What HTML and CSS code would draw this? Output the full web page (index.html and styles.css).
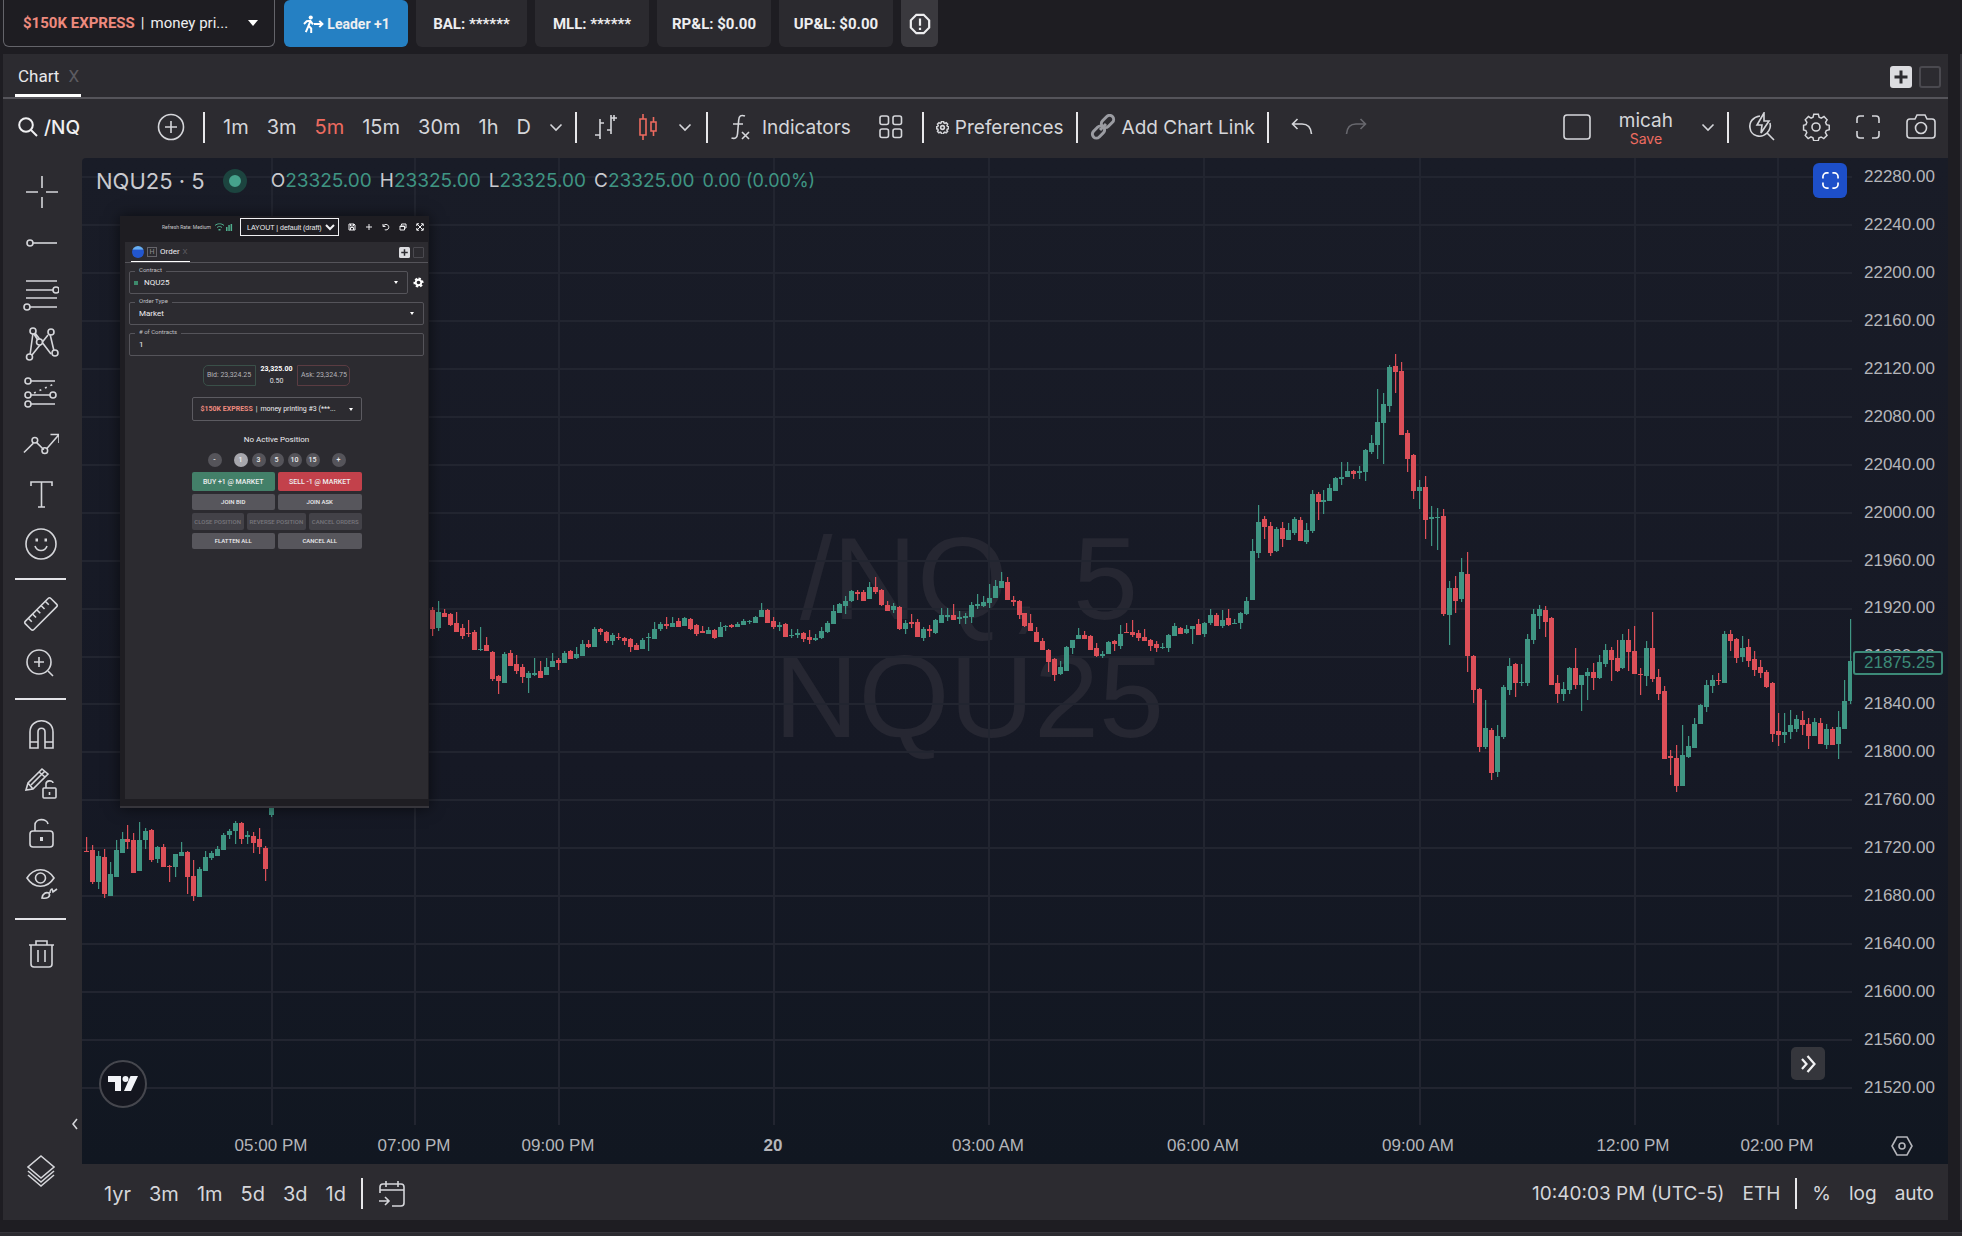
FILE: index.html
```html
<!DOCTYPE html>
<html lang="en">
<head>
<meta charset="utf-8">
<title>NQU25 Chart</title>
<link rel="stylesheet" href="styles.css">
</head>
<body>
<svg class="defs" aria-hidden="true">
  <symbol id="chev" viewBox="0 0 14 14"><path d="M1.500 4.500 7 10l5.500-5.500"/></symbol>
  <symbol id="gear" viewBox="0 0 28 28"><path d="M11.500 2h5l.8 3.300 2.300 1 3-1.800 3.400 3.500-1.700 2.900 1 2.400 3 .7v4.900l-3.200.8-1 2.300 1.800 3-3.500 3.400-2.900-1.700-2.300 1-.8 3.100h-5l-.8-3.200-2.200-1-3 1.800L2.200 25l1.700-3-1-2.300-2.500-.7v-5l2.600-.7 1-2.400-1.800-2.900L5.700 4.500l2.900 1.800 2.100-1z" transform="translate(1.200 -.6) scale(.92 .92)"/><circle cx="14" cy="14" r="4"/></symbol>
  <symbol id="plusbox" viewBox="0 0 22 22"><rect width="22" height="22" rx="3" fill="#dcdce0" stroke="none"/><path d="M11 4.500v13M4.500 11h13" stroke="#2b2a2f" stroke-width="3"/></symbol>
  <symbol id="corners" viewBox="0 0 24 24"><path d="M1 8V4a3 3 0 0 1 3-3h4M16 1h4a3 3 0 0 1 3 3v4M23 16v4a3 3 0 0 1-3 3h-4M8 23H4a3 3 0 0 1-3-3v-4"/></symbol>
</svg>

<header class="topbar">
  <button class="account" aria-haspopup="listbox"><strong>$150K EXPRESS</strong><span class="bar">|</span><span>money pri...</span><i class="caret"></i></button>
  <button class="leader"><svg viewBox="0 0 24 20"><g fill="none" stroke="#fff" stroke-width="2.200"><path d="M9 7 7 12l3 3v5M7 12l-3 7M2 10l3-3 4-.5 3 4M13 10h9M19 6.500l3.500 3.500-3.500 3.500"/></g><circle cx="9.500" cy="2.800" r="2.300" fill="#fff"/></svg>Leader +1</button>
  <span class="stat">BAL: ******</span>
  <span class="stat">MLL: ******</span>
  <span class="stat">RP&amp;L: $0.00</span>
  <span class="stat">UP&amp;L: $0.00</span>
  <button class="alert" aria-label="Alerts"><svg class="ic" viewBox="0 0 24 24"><path stroke-width="2.400" d="M8 2h8l6 6v8l-6 6H8l-6-6V8zM12 6v8M12 16v2.500"/></svg></button>
</header>

<div class="stage">
<main class="panel">
  <nav class="tabs">
    <a class="tab" href="#chart">Chart <span class="close">X</span></a>
    <button class="tabbtn" aria-label="Add tab"><svg viewBox="0 0 22 22"><use href="#plusbox"/></svg></button>
    <button class="tabbtn square" aria-label="Maximize"></button>
  </nav>

  <div class="toolbar">
    <button class="symbol"><svg class="ic w20" viewBox="0 0 20 20"><circle cx="8" cy="8" r="6.800" stroke-width="2"/><path stroke-width="2" d="m13 13 6 6"/></svg>/NQ</button>
    <button aria-label="Compare"><svg class="ic w28" viewBox="0 0 28 28"><circle cx="14" cy="14" r="12.500"/><path d="M14 8v12M8 14h12"/></svg></button>
    <i class="sep wide"></i>
    <div class="intervals">
      <button>1m</button><button>3m</button><button class="on">5m</button><button>15m</button><button>30m</button><button>1h</button><button>D</button>
      <button aria-label="More intervals"><svg class="ic w14" viewBox="0 0 14 14"><use href="#chev"/></svg></button>
    </div>
    <i class="sep tight"></i>
    <div class="icons">
      <button aria-label="Bars"><svg class="ic w24" viewBox="0 0 24 26"><path d="M6 5v20M1 21h5M6 9h4M17 1v19M13 16h4M17 4h6M20 1v6" /></svg></button>
      <button class="on" aria-label="Candles"><svg class="ic w24" viewBox="0 0 24 28"><path d="M4 6h6v16H4zM7 1v5M7 22v5M15 9h5v9h-5zM17.500 4v5M17.500 18v5"/></svg></button>
      <button aria-label="Chart types"><svg class="ic w14" viewBox="0 0 14 14"><use href="#chev"/></svg></button>
    </div>
    <i class="sep"></i>
    <button class="indicators"><svg class="ic w20" viewBox="0 0 20 26"><path d="M15 2c-4-1.500-6 0-6.300 4L7.500 20c-.3 4-2.500 5-6 4M3 10h10M12 18l7 7M19 18l-7 7"/></svg>Indicators</button>
    <button class="grid4" aria-label="Templates"><svg class="ic w24" viewBox="0 0 24 24"><rect x="1" y="1" width="8.500" height="8.500" rx="2"/><rect x="14" y="1" width="8.500" height="8.500" rx="2"/><rect x="1" y="14" width="8.500" height="8.500" rx="2"/><rect x="14" y="14" width="8.500" height="8.500" rx="2"/></svg></button>
    <i class="sep tight"></i>
    <button class="pref"><svg class="ic w12" viewBox="0 0 28 28"><g stroke-width="3.500"><use href="#gear"/></g></svg>Preferences</button>
    <i class="sep tight"></i>
    <button class="pref"><svg class="ic w26" viewBox="0 0 26 26"><g stroke="#9b9ca2" stroke-width="3"><rect x="10.500" y="3.500" width="14" height="8" rx="4" transform="rotate(-45 17.500 7.500)"/><rect x="1.500" y="14" width="14" height="8" rx="4" transform="rotate(-45 8.500 18)"/><path d="m10 16 6-6"/></g></svg>Add Chart Link</button>
    <i class="sep tight"></i>
    <div class="undo">
      <button aria-label="Undo"><svg class="ic w22" viewBox="0 0 22 20"><path d="M6.500 2 1.500 7l5 5M1.500 7H11c6 0 9 4 9.500 10"/></svg></button>
      <button class="off" aria-label="Redo"><svg class="ic w22" viewBox="0 0 22 20"><path d="m15.500 2 5 5-5 5M20.500 7H11C5 7 2 11 1.500 17"/></svg></button>
    </div>
    <div class="right">
      <button aria-label="Layout"><svg class="ic w28" viewBox="0 0 28 26"><rect x="1" y="1" width="26" height="24" rx="3"/></svg></button>
      <button class="save">micah<small>Save</small></button>
      <button aria-label="Layouts"><svg class="ic w14" viewBox="0 0 14 14"><use href="#chev"/></svg></button>
    </div>
    <i class="sep tight"></i>
    <div class="tools">
      <button aria-label="Quick search"><svg class="ic w28" viewBox="0 0 28 30"><path d="M12 4C5 5 1 10 2 16c1 8 11 11 17 5l7 7M19 21c3-3 4-6 3-10"/><path d="M16 1 9 13h5l-1 8 8-12h-5z"/></svg></button>
      <button aria-label="Settings"><svg class="ic w28" viewBox="0 0 28 28"><use href="#gear"/></svg></button>
      <button aria-label="Fullscreen"><svg class="ic w24" viewBox="0 0 24 24"><use href="#corners"/></svg></button>
      <button aria-label="Snapshot"><svg class="ic w30" viewBox="0 0 30 26"><path d="M4 5h5l2-4h8l2 4h5a3 3 0 0 1 3 3v13a3 3 0 0 1-3 3H4a3 3 0 0 1-3-3V8a3 3 0 0 1 3-3z"/><circle cx="15" cy="14" r="5.500"/></svg></button>
    </div>
  </div>

  <div class="body">
    <aside class="rail">
      <button aria-label="Cross"><svg class="ic w36" viewBox="0 0 36 36"><path d="M19 2v12M19 23v11M3 18h12M23 18h12"/></svg></button>
      <button aria-label="Trend line"><svg class="ic w36" viewBox="0 0 36 36"><circle cx="7" cy="18" r="3"/><path d="M10 18h24"/></svg></button>
      <button aria-label="Fib retracement"><svg class="ic w36" viewBox="0 0 36 36"><path d="M3 5h31M3 14h27M3 22h31M7 31h27"/><circle cx="33" cy="14" r="3"/><circle cx="4" cy="31" r="3"/></svg></button>
      <button aria-label="Pattern"><svg class="ic w36" viewBox="0 0 36 36"><path d="M10 7 7 29M12 7l16 21M27 8l4 17M25 9 9 29M11 8l5 8"/><g fill="#2c2b30"><circle cx="10" cy="5" r="3"/><circle cx="28" cy="6" r="3"/><circle cx="16.500" cy="16" r="3"/><circle cx="6.500" cy="31" r="3"/><circle cx="32" cy="27" r="3"/></g></svg></button>
      <button aria-label="Projection"><svg class="ic w36" viewBox="0 0 36 36"><path d="M8 5h24M8 19h19M8 28h24"/><path stroke-dasharray="2 4" d="m11 17 20-9"/><circle cx="5" cy="5" r="3"/><circle cx="5" cy="19" r="3"/><circle cx="30" cy="19" r="3"/><circle cx="5" cy="28" r="3"/></svg></button>
      <button aria-label="Zigzag"><svg class="ic w36" viewBox="0 0 38 36"><path d="m1 27 10-10M14 16l8 8M25 23l13-15M29 8h9v9"/><circle cx="12.500" cy="14" r="3"/><circle cx="23" cy="25" r="3"/></svg></button>
      <button aria-label="Text"><svg class="ic w36" viewBox="0 0 36 36"><path d="M8 10V6h21v4M18.500 6v25M15 31h7"/></svg></button>
      <button aria-label="Emoji"><svg class="ic w36" viewBox="0 0 36 36"><circle cx="18" cy="18" r="15"/><path d="M12 20c2 6 10 6 12 0"/><path stroke-width="3" d="M12.500 14h2.500M21.500 14H24"/></svg></button>
      <hr>
      <button aria-label="Ruler"><svg class="ic w36" viewBox="0 0 36 36"><g transform="rotate(-45 18 18)"><rect x="0" y="12" width="36" height="12" rx="2"/><path d="M6 12v5M12 12v5M18 12v5M24 12v5M30 12v5"/></g></svg></button>
      <button aria-label="Zoom in"><svg class="ic w36" viewBox="0 0 36 36"><circle cx="16" cy="16" r="12"/><path d="M16 11v10M11 16h10M25 25l5 5"/></svg></button>
      <hr>
      <button aria-label="Magnet"><svg class="ic w36" viewBox="0 0 36 36"><path d="M7 32V16c0-15 23-15 23 0v16h-8V16c0-5-7-5-7 0v16zM7 26h8M22 26h8"/></svg></button>
      <button aria-label="Keep drawing"><svg class="ic w36" viewBox="0 0 36 36"><path d="m3 24 2-7L19 3l6 5-15 15zM5 17l5 6M8 19 22 5M16 6l6 5"/><rect x="20" y="22" width="13" height="10" rx="1"/><path d="M23 22v-4c0-4 7-4 7-1M26.500 26v3"/></svg></button>
      <button aria-label="Lock"><svg class="ic w36" viewBox="0 0 36 36"><rect x="7" y="15" width="23" height="16" rx="3"/><path d="M12 15V9c0-7 12-7 13-1"/><path stroke-width="3" d="M18.500 21v4"/></svg></button>
      <button aria-label="Hide"><svg class="ic w36" viewBox="0 0 36 36"><path d="M4 12C11 1 24 1 31 12 24 23 11 23 4 12z"/><circle cx="17.500" cy="12" r="5"/><path d="M19 32c1-5 4-6 7-5 2 4-2 6-7 5zM27 27c0-2 1-4 2-4l1 3 4-3"/></svg></button>
      <hr>
      <button aria-label="Delete"><svg class="ic w36" viewBox="0 0 36 36"><path d="M6 9h25M13 9V5h11v4M8 9v19a3 3 0 0 0 3 3h15a3 3 0 0 0 3-3V9M15 14v12M22 14v12"/></svg></button>
      <button class="collapse" aria-label="Collapse"><svg class="ic" viewBox="0 0 6 12"><path d="M5 1 1 6l4 5"/></svg></button>
      <button class="layers" aria-label="Object tree"><svg class="ic w36" viewBox="0 0 36 36"><path d="m18 3 13 11-13 11L5 14zM5 18l13 11 13-11M5 22l13 11 13-11"/></svg></button>
    </aside>

    <div class="work">
      <section class="chart" id="chart">
        <div class="plot">
          <div class="watermark"><span>/NQ, 5</span><span>NQU25</span></div>
          <svg class="candles" id="candles" viewBox="0 0 1770 967" preserveAspectRatio="none" role="img" aria-label="NQU25 five minute candles"></svg>
          <div class="legend">
            <h1>NQU25 · 5</h1><i class="live"></i>
            <span>O<b>23325.00</b></span><span>H<b>23325.00</b></span><span>L<b>23325.00</b></span><span>C<b>23325.00</b></span><b class="change">0.00 (0.00%)</b>
          </div>
          <button class="expand" aria-label="Expand"><svg class="ic" viewBox="0 0 18 18"><path stroke-width="1.800" d="M1 7V5a4 4 0 0 1 4-4h2M11 1h2a4 4 0 0 1 4 4v2M17 11v2a4 4 0 0 1-4 4h-2M7 17H5a4 4 0 0 1-4-4v-2"/></svg></button>
          <button class="latest" aria-label="Scroll to latest"><svg class="ic" viewBox="0 0 18 18"><path stroke-width="2.200" d="m3 4 4.500 5L3 14M8.500 1l7 8-7 8"/></svg></button>
          <a class="logo" href="#tv" aria-label="TradingView"><svg viewBox="0 0 32 20"><path fill="#f2f3f7" d="M1 2h13v15H8V8H1zM24 17h-7l6.500-15h7.500z"/><circle cx="18.500" cy="5" r="3" fill="#f2f3f7"/></svg></a>
        </div>
        <div class="prices">
          <span>22280.00</span><span>22240.00</span><span>22200.00</span><span>22160.00</span><span>22120.00</span><span>22080.00</span><span>22040.00</span><span>22000.00</span><span>21960.00</span><span>21920.00</span><span>21880.00</span><span>21840.00</span><span>21800.00</span><span>21760.00</span><span>21720.00</span><span>21680.00</span><span>21640.00</span><span>21600.00</span><span>21560.00</span><span>21520.00</span>
          <output class="last">21875.25</output>
        </div>
        <div class="times"><span>05:00 PM</span><span>07:00 PM</span><span>09:00 PM</span><strong>20</strong><span>03:00 AM</span><span>06:00 AM</span><span>09:00 AM</span><span>12:00 PM</span><span>02:00 PM</span></div>
        <button class="axisset" aria-label="Axis settings"><svg class="ic w22" viewBox="0 0 22 22"><path d="M6 2h10l5 9-5 9H6l-5-9z"/><circle cx="11" cy="11" r="3"/></svg></button>

        <section class="order">
          <div class="ohead">
            <span class="rate">Refresh Rate: Medium</span>
            <svg class="green" viewBox="0 0 18 8"><g fill="none" stroke="#4fae8d"><path d="M0 2.500C2.500.2 6.500.2 9 2.500M2 4.500c1.500-1.300 3.500-1.300 5 0"/></g><path fill="#4fae8d" d="M3.500 6h2v1.500h-2zM11 4h1.500v4H11zM13.300 2h1.500v6h-1.500zM15.600 1h1.500v7h-1.500z"/></svg>
            <select aria-label="Layout"><option>LAYOUT | default (draft)</option></select>
            <button aria-label="Save layout"><svg class="ic" viewBox="0 0 16 16"><path d="M2 2h10l2 2v10H2zM5 2v4h6V2M5 14V9h6v5"/></svg></button>
            <button aria-label="Add"><svg class="ic" viewBox="0 0 16 16"><path d="M8 2v12M2 8h12"/></svg></button>
            <button aria-label="Reset"><svg class="ic" viewBox="0 0 16 16"><path d="M2 2v5h5M2.500 6.500c4-7 12-3 11 3-1 4-5 5-8 4"/></svg></button>
            <button aria-label="Windows"><svg class="ic" viewBox="0 0 16 16"><path d="M5 5V2h9v8h-3M2 6h9v8H2zM2 7h9"/></svg></button>
            <button aria-label="Expand window"><svg class="ic" viewBox="0 0 16 16"><path d="m2 2 12 12M14 2 2 14M1.500 6V1.500H6M10 1.500h4.500V6M14.500 10v4.500H10M6 14.500H1.500V10"/></svg></button>
          </div>
          <div class="opanel">
            <nav class="otabs">
              <a class="otab" href="#order"><i class="ball"></i><i class="hbox">H</i>Order <span class="close">X</span></a>
              <button class="obtn" aria-label="Add tab"><svg viewBox="0 0 22 22"><use href="#plusbox"/></svg></button>
              <button class="obtn square" aria-label="Maximize"></button>
            </nav>
            <div class="form">
              <div class="line">
                <div class="field dot"><label for="contract">Contract</label><select id="contract"><option>NQU25</option></select><i class="caret"></i></div>
                <button class="cog" aria-label="Order settings"><svg viewBox="0 0 24 24"><path fill="none" stroke="#fff" stroke-width="4" stroke-dasharray="5.200 4.225" d="M12 3a9 9 0 1 1 0 18 9 9 0 1 1 0-18"/><circle cx="12" cy="12" r="6" fill="none" stroke="#fff" stroke-width="4"/></svg></button>
              </div>
              <div class="field"><label for="type">Order Type</label><select id="type"><option>Market</option></select><i class="caret"></i></div>
              <div class="field"><label for="qty"># of Contracts</label><input id="qty" value="1"></div>
            </div>
            <div class="quote"><span class="bid">Bid: 23,324.25</span><span class="mid"><b>23,325.00</b>0.50</span><span class="ask">Ask: 23,324.75</span></div>
            <button class="oacct" aria-haspopup="listbox"><strong>$150K EXPRESS</strong><span class="bar">|</span><span>money printing #3 (***...</span><i class="caret"></i></button>
            <p class="pos">No Active Position</p>
            <div class="qtys"><button class="end">-</button><button class="sel">1</button><button>3</button><button>5</button><button>10</button><button>15</button><button class="end">+</button></div>
            <div class="acts">
              <div class="row big"><button class="buy">BUY +1 @ MARKET</button><button class="sell">SELL -1 @ MARKET</button></div>
              <div class="row"><button>JOIN BID</button><button>JOIN ASK</button></div>
              <div class="row three"><button disabled>CLOSE POSITION</button><button disabled>REVERSE POSITION</button><button disabled>CANCEL ORDERS</button></div>
              <div class="row"><button>FLATTEN ALL</button><button>CANCEL ALL</button></div>
            </div>
          </div>
        </section>
      </section>

      <footer class="ranges">
        <button>1yr</button><button>3m</button><button>1m</button><button>5d</button><button>3d</button><button>1d</button>
        <i class="sep"></i>
        <button aria-label="Go to date"><svg class="ic w28" viewBox="0 0 28 28"><path d="M2 13V7a3 3 0 0 1 3-3h18a3 3 0 0 1 3 3v16a3 3 0 0 1-3 3h-9M2 10h24M8 1v6M20 1v6M1 21h10M7 17l4 4-4 4"/></svg></button>
        <div class="clock"><span>10:40:03 PM (UTC-5)</span><button>ETH</button><i class="sep"></i><button>%</button><button>log</button><button>auto</button></div>
      </footer>
    </div>
  </div>
</main>
<div class="nextcol"></div>
</div>
<div class="nextrow"></div>
<script src="chart.js"></script>
</body>
</html>
```
FILE: styles.css
```css
* { box-sizing: border-box; }
body {
  margin: 0;
  height: 100vh;
  min-height: 1100px;
  display: flex;
  flex-direction: column;
  background: #1e1d22;
  color: #d5d6da;
  font-family: Inter, "Liberation Sans", sans-serif;
  font-size: 19px;
  overflow: hidden;
}
button, select, input { font: inherit; color: inherit; background: none; border: 0; padding: 0; margin: 0; }
button { display: flex; align-items: center; justify-content: center; white-space: nowrap; cursor: pointer; }
a { color: inherit; text-decoration: none; }
svg { display: block; flex: none; }
.defs { width: 0; height: 0; position: absolute; }
.ic { fill: none; stroke: currentColor; stroke-width: 1.600; }
.w12 { width: 13px; } .w14 { width: 14px; } .w20 { width: 20px; } .w22 { width: 22px; }
.w24 { width: 24px; } .w26 { width: 26px; } .w28 { width: 28px; } .w30 { width: 30px; } .w36 { width: 36px; }

/* account bar */
.topbar {
  display: flex;
  gap: 8px;
  height: 54px;
  padding: 0 3px 7px;
  font: bold 15px Roboto, sans-serif;
  color: #eeeef0;
}
.topbar > * { border-radius: 0 0 6px 6px; }
.account { width: 272px; padding: 0 16px 0 19px; justify-content: flex-start; border: 1px solid #64646a; border-top: 0; font-size: 15px; font-weight: 400; }
.account strong, .oacct strong { color: #ee8a7e; font-weight: 700; }
.bar { margin: 0 6px; font-weight: 400; }
.caret { margin-left: auto; border: 5px solid transparent; border-top: 6px solid #fff; border-bottom: 0; }
.leader { width: 124px; background: #2580c3; gap: 3px; font-size: 14px; }
.topbar .leader { border-radius: 6px; margin-left: 1px; }
.leader svg { width: 22px; height: 18px; }
.stat { width: 114px; display: grid; place-items: center; background: #2b2a2f; }
.stat:nth-of-type(1) { width: 111px; }
.alert { width: 37px; background: #3a393e; }
.alert svg { width: 22px; }

.stage { flex: 1; min-height: 0; display: flex; gap: 12px; padding-left: 3px; }
.panel { flex: 1; min-width: 0; display: flex; flex-direction: column; background: #2c2b30; }
.nextcol { width: 2px; background: #35343a; }
.nextrow { height: 4px; margin-top: 12px; background: #2c2b30; border-top: 1px solid #35343a; }

/* tab strip */
.tabs { height: 45px; display: flex; align-items: center; gap: 7px; padding: 0 7px 0 12px; border-bottom: 2px solid #55545a; }
.tab { align-self: stretch; display: flex; align-items: center; gap: 9px; margin-right: auto; padding: 4px 2px 0 3px; border-bottom: 3px solid #fff; font: 17px Roboto, sans-serif; color: #e8e8ea; }
.close { color: #5c5b61; font-weight: 400; }
.tabbtn { width: 22px; height: 22px; margin-top: 2px; }
.square { border: 2px solid #4a494f; border-radius: 3px; }

/* chart toolbar */
.toolbar { height: 59px; display: flex; align-items: center; padding: 0 12px 3px 15px; }
.sep { width: 2px; height: 31px; margin: 0 14px; background: #e8e8ea; }
.sep.wide { margin: 0 18px; }
.sep.tight { margin: 0 12px; }
.symbol { width: 139px; justify-content: flex-start; gap: 6px; color: #f0f0f2; font-weight: 500; }
.intervals { display: flex; gap: 18px; font-size: 20px; }
.on { color: #ee6b60; }
.icons { display: flex; align-items: center; gap: 18px; padding-left: 5px; }
.indicators { gap: 12px; margin-left: 8px; }
.grid4 { margin: 0 7px 0 28px; }
.pref { gap: 6px; }
.undo { display: flex; gap: 32px; margin-left: 10px; }
.off { color: #68686e; }
.right { display: flex; align-items: center; gap: 28px; margin-left: auto; }
.save { flex-direction: column; line-height: 20px; padding-top: 4px; }
.save small { font-size: 14px; line-height: 16px; color: #ee6b60; }
.tools { display: flex; align-items: center; gap: 26px; padding-left: 7px; }

.body { flex: 1; min-height: 0; display: flex; }
.rail { position: relative; width: 79px; display: flex; flex-direction: column; align-items: center; padding: 8px 4px 24px 0; }
.rail button { width: 50px; height: 50px; }
.rail hr { width: 51px; height: 2px; margin: 9px 0; border: 0; background: #e4e4e8; }
.rail button:nth-child(-n+3) { height: 51px; }
.rail .layers { margin-top: auto; }
.rail .collapse { position: absolute; right: 4px; bottom: 90px; width: 6px; height: 12px; }
.collapse svg { width: 6px; }

.work { flex: 1; min-width: 0; display: flex; flex-direction: column; }
.chart {
  position: relative;
  flex: 1;
  display: grid;
  grid-template: 1fr 39px / 1fr 96px;
  background: linear-gradient(#191c27, #161925 60%, #111721);
  border-top-left-radius: 4px;
  font-family: "Liberation Sans", sans-serif;
  font-size: 17px;
  color: #b4b5ba;
}
.plot { position: relative; }
.candles { position: absolute; inset: 0; width: 100%; height: 100%; }
.candles .grid { stroke: #222530; stroke-width: 2; }
.candles .up { fill: #3f9583; }
.candles .down { fill: #dc4f58; }
.watermark { position: absolute; inset: 0; display: flex; flex-direction: column; align-items: center; justify-content: center; padding: 0 0 7px 4px; font-size: 117px; line-height: 118px; color: #262732; }
.legend { position: absolute; top: 10px; left: 14px; display: flex; align-items: center; gap: 8px; font: 19px/26px Inter, sans-serif; color: #c9cacf; }
.legend h1 { margin: 0 10px 0 0; font-size: 22px; font-weight: 400; }
.legend b { font-weight: 400; color: #3f9583; }
.legend .change { font-size: 18px; }
.live { width: 24px; height: 24px; margin-right: 16px; border: 6px solid #1c443f; border-radius: 50%; background: #46a28c; }
.expand { position: absolute; top: 5px; right: 5px; width: 34px; height: 35px; border-radius: 6px; background: #1d4fc9; color: #fff; }
.expand svg { width: 17px; }
.latest { position: absolute; right: 27px; bottom: 45px; width: 34px; height: 33px; border-radius: 5px; background: #35363c; color: #f2f2f4; }
.latest svg { width: 18px; }
.logo { position: absolute; left: 17px; bottom: 17px; width: 48px; height: 48px; display: grid; place-items: center; border: 2px solid #46474e; border-radius: 50%; background: #14161f; }
.logo svg { width: 32px; }
.prices { position: relative; display: flex; flex-direction: column; justify-content: space-between; padding: 8px 0 26px 12px; line-height: 22px; }
.last { position: absolute; top: 51%; left: 1px; width: 90px; height: 24px; padding-left: 9px; border: 2px solid #3c8a78; border-radius: 3px; background: #151a25; color: #3c8a78; line-height: 20px; }
.times { display: grid; grid-template-columns: 189fr 143fr 144fr 215fr 215fr 215fr 215fr 215fr 144fr 75fr; align-items: center; padding-top: 3px; }
.times > * { justify-self: end; transform: translateX(50%); white-space: nowrap; }
.axisset { padding-top: 2px; margin-left: 3px; }

.ranges { height: 56px; display: flex; align-items: center; gap: 18px; padding: 3px 14px 0 22px; font-size: 20px; }
.ranges .sep { margin: 0 -3px; }
.clock { display: flex; align-items: center; gap: 18px; margin-left: auto; font-size: 19px; }

/* order window */
.order { position: absolute; top: 58px; left: 38px; width: 309px; height: 592px; padding: 0 1px 7px 5px; display: flex; flex-direction: column; background: #1e1d22; border-bottom: 2px solid #36353b; box-shadow: 0 0 14px #0009; font: 8px/10px Roboto, sans-serif; color: #eeeef0; }
.ohead { height: 26px; display: flex; align-items: center; justify-content: flex-end; gap: 9px; padding: 0 4px 4px 0; }
.ohead .rate { font-size: 5px; margin-right: -5px; color: #c8c8cc; white-space: nowrap; }
.ohead .green { width: 18px; height: 8px; margin-right: -2px; }
.ohead select { width: 99px; height: 18px; padding-left: 2px; border: 1px solid #f0f0f2; font: 7px "Liberation Sans", sans-serif; background: #1e1d22; }
.ohead button svg { width: 8px; stroke-width: 2; }
.opanel { flex: 1; display: flex; flex-direction: column; align-items: center; background: #2c2b30; }
.otabs { align-self: stretch; height: 21px; display: flex; align-items: center; gap: 3px; padding: 0 4px 0 6px; border-bottom: 1px solid #55545a; }
.otab { align-self: stretch; display: flex; align-items: center; gap: 3px; padding: 0 2px 0 1px; margin-right: auto; border-bottom: 1px solid #fff; }
.ball { width: 12px; height: 12px; border-radius: 50%; background: linear-gradient(#67aef2 0 25%, #2256cf 35%); }
.hbox { width: 10px; height: 10px; border: 1px solid #66656b; font: 7px/8px Roboto, sans-serif; text-align: center; color: #8e8d93; }
.obtn { width: 11px; height: 11px; }
.obtn svg { width: 11px; }
.obtn.square { border-width: 1px; border-radius: 1px; }
.form { align-self: stretch; display: flex; flex-direction: column; gap: 8px; padding: 8px 4px 0; }
.line { display: flex; align-items: center; gap: 5px; }
.field { position: relative; flex: 1 0 auto; display: flex; align-items: center; height: 23px; padding: 0 9px; border: 1px solid #55545a; border-radius: 2px; }
.field label { position: absolute; top: -6px; left: 5px; padding: 0 4px; background: #2c2b30; font-size: 6px; line-height: 8px; color: #c0c0c4; }
.field select, .field input { flex: 1; min-width: 0; width: 100px; height: 18px; appearance: none; font-size: 8px; }
.field.dot::before { content: ""; width: 4px; height: 4px; margin: 0 6px 0 -5px; background: #3d8a6c; }
.order .caret { border-width: 3px 2px 0; }
.cog svg { width: 11px; }
.quote { display: flex; align-items: center; gap: 5px; margin-top: 7px; color: #b4b4b8; }
.quote .mid { display: grid; text-align: center; font-size: 7px; line-height: 12px; color: #e0e0e3; }
.quote b { color: #fff; }
.bid, .ask { width: 53px; height: 21px; display: grid; place-items: center; font-size: 7px; white-space: nowrap; border: 1px solid #3a5049; border-radius: 5px 0 0 5px; }
.ask { border-color: #5b3c42; border-radius: 0 5px 5px 0; }
.oacct { width: 170px; height: 24px; margin-top: 10px; padding: 0 8px; font-size: 7px; border: 1px solid #5c5b61; border-radius: 2px; }
.order .bar { margin: 0 3px; }
.pos { margin: 14px 0 8px; }
.qtys { display: flex; gap: 4px; font-size: 7px; }
.qtys button { width: 14px; height: 14px; border-radius: 50%; background: #55545a; font-weight: 500; }
.qtys .sel { background: #a6a6ac; margin-left: 8px; }
.qtys .end:last-child { margin-left: 8px; }
.acts { width: 170px; display: flex; flex-direction: column; gap: 3px; margin-top: 5px; }
.row { display: flex; gap: 3px; }
.row button { flex: 1 1 0; height: 16px; border-radius: 2px; background: #57565c; font-size: 6px; font-weight: 500; }
.row.big button { height: 19px; font-size: 7px; }
.row .buy { background: #438069; }
.row .sell { background: #c3414b; }
.row.three button { flex: auto; height: 17px; background: #434248; color: #77767c; }
```
FILE: chart.js
```javascript
// One entry per five-minute bar: direction, then high, body top, body bottom, low on the 967-unit plot.
const early = `d679 693 694 694;d687 692 724 726;u693 698 724 731;d691 699 736 740;u704 716 738 738;u682 692 719 719;u674 681 695 695;d667 681 684 691;d675 682 715 715;u664 682 713 713;u670 673 682 691;d671 672 702 704;u688 689 701 705;d686 689 709 709;d707 708 709 724;u696 696 709 719;u684 694 698 698;d693 694 719 736;d702 718 738 743;u709 711 739 739;u693 699 713 713;u693 695 700 702;u688 691 698 698;u675 677 692 692;u671 673 677 681;u663 665 673 686;d664 665 681 686;u673 677 679 686;d674 678 685 695;d670 681 689 696;d688 690 711 723;u630 630 657 659`;
const later = `d449 452 471 478;u443 454 470 473;d451 455 459 459;d455 456 467 468;d454 465 474 474;d466 470 478 481;d462 475 476 479;d472 474 492 492;u469 491 492 493;d479 487 493 493;d493 494 521 523;d517 518 523 536;u494 496 525 525;d492 495 508 508;d497 506 513 516;d506 509 519 525;u513 515 520 535;u500 515 517 518;d503 513 520 520;u500 509 517 517;u495 503 509 509;d500 502 505 512;u493 495 505 505;d492 493 501 501;u489 496 500 501;u482 486 498 498;d482 486 489 490;u469 471 489 489;d470 471 474 477;d473 474 483 485;u475 477 483 487;d475 479 480 482;d479 480 483 487;d480 481 489 494;d485 487 492 492;u480 482 491 491;u475 479 480 493;u464 471 481 481;u464 466 471 473;d459 466 468 471;u459 465 469 469;d460 463 469 469;u459 460 468 468;d460 461 471 472;d466 467 476 478;d468 473 475 475;u469 472 476 476;d471 472 480 481;u464 469 479 479;u467 468 469 473;d466 467 469 470;u464 466 469 469;u461 463 467 467;u462 463 464 466;u458 459 465 465;u445 452 459 459;d451 452 465 465;d459 463 469 471;u464 467 469 473;d465 466 479 479;u471 477 478 480;u471 475 477 480;d474 475 481 484;d472 479 482 486;u476 480 482 483;u469 473 480 481;u463 465 474 475;u447 453 466 466;u445 446 455 455;u438 443 448 456;u432 433 443 444;d432 434 436 442;d432 434 443 443;u424 429 441 441;d419 429 434 436;d431 432 447 448;d443 447 453 453;u445 448 452 455;d448 449 471 472;u462 465 471 476;d456 464 466 470;d461 464 479 479;u469 471 480 483;d467 471 473 479;u461 462 475 476;u450 457 465 465;u450 457 459 463;d446 457 462 462;u453 459 461 466;u455 458 460 466;u444 447 459 465;u436 446 448 451;u438 444 448 449;u426 440 445 450;u422 428 440 440;u414 423 430 430;d419 424 442 442;d438 442 444 448;d442 443 457 461;d455 455 468 469;d456 465 473 473;d469 474 484 484;d480 483 492 492;d491 492 504 514;d500 501 517 523;u503 509 516 517;u488 489 513 513;u482 482 490 496;u470 477 481 481;d473 477 481 481;d477 478 492 492;d485 490 498 499;u493 496 498 500;u483 484 496 496;d482 483 486 493;u467 476 488 491;d465 474 475 475;d462 474 477 479;d472 475 480 483;d471 479 483 483;d481 482 488 493;d483 486 490 494;u485 489 490 491;u476 477 490 494;u465 468 478 478;d469 470 476 476;u467 471 475 476;u468 468 471 486;d461 466 477 477;u464 465 476 479;u451 457 465 467;d455 457 468 468;u452 462 468 470;d451 460 467 468;u461 465 466 466;u454 455 465 471;u439 443 456 457;u381 393 442 442;u347 364 395 400;d358 361 369 381;d364 368 395 398;u369 371 393 394;d364 370 381 389;u365 372 382 382;u359 361 375 377;d359 362 383 383;u365 372 384 386;u332 336 373 375;d334 336 344 362;u332 342 344 356;u326 330 343 343;u319 320 333 333;u304 319 321 327;u304 313 319 319;d312 313 316 321;u308 313 315 321;u291 292 314 323;u277 285 294 296;u231 264 287 301;u235 246 265 306;u207 209 248 254;d196 208 214 235;d204 213 277 277;d272 275 301 314;d296 297 333 341;u322 329 333 351;d318 329 362 381;u348 359 361 388;u350 359 360 392;d351 358 456 458;u423 430 457 487;d418 430 443 455;u400 414 441 444;d394 416 498 514;d497 498 532 545;d530 531 589 594;u542 570 589 591;d570 572 615 622;u567 578 614 619;u527 529 579 581;u500 508 532 537;d505 506 525 539;u506 524 525 528;u476 481 525 528;u451 456 482 486;u447 451 458 471;d448 452 464 479;d459 460 527 527;d517 525 536 545;u524 531 536 543;u509 510 532 536;d490 510 527 531;u517 517 527 553;u510 514 518 542;d505 514 520 532;u497 504 520 521;u486 492 506 509;d489 492 502 523;d482 500 513 514;u476 482 510 511;d471 482 494 513;d468 493 516 516;d510 516 517 537;u483 490 518 528;d454 490 521 524;d511 519 536 542;d528 533 601 601;d592 598 600 617;d587 600 628 634;u567 597 628 628;u578 588 599 600;u560 566 590 590;u546 547 566 566;u522 527 549 554;u517 522 528 535;d515 522 523 527;u473 476 525 525;d472 476 483 493;d480 481 500 505;u478 490 499 504;d481 489 503 509;d493 501 512 518;d502 509 515 520;d512 514 529 530;d524 525 576 584;d555 573 577 588;u555 574 577 585;u552 567 574 581;u557 561 571 574;d553 562 567 577;d560 566 578 591;u560 564 578 578;d560 565 586 586;u566 571 587 591;d569 571 587 587;u553 569 586 601;u522 543 571 571;u461 503 543 546`;

const STEP = 5.98;
const ORIGIN = 189.5; // 05:00 PM
let out = '<g class="grid">';
for (let i = 0; i < 20; i++) {
  const y = Math.round(19 + i * 47.95);
  out += `<path d="M0 ${y}H1770"/>`;
}
for (const bar of [0, 24, 48, 84, 120, 156, 192, 228, 252]) {
  const x = Math.round(ORIGIN + bar * STEP);
  out += `<path d="M${x} 0V967"/>`;
}
out += '</g>';

function draw(series, firstBar) {
  series.split(';').forEach((row, i) => {
    const cls = row[0] === 'u' ? 'up' : 'down';
    const [high, top, bottom, low] = row.slice(1).split(' ').map(Number);
    const x = Math.round(ORIGIN + (firstBar + i) * STEP - .5);
    out += `<path class="${cls}" d="M${x - 2} ${top}h5v${Math.max(bottom - top, 1)}h-5zM${x} ${high}h1.200V${low}h-1.200z"/>`;
  });
}
draw(early, -31);
draw(later, 27);
document.getElementById('candles').innerHTML = out;
```
